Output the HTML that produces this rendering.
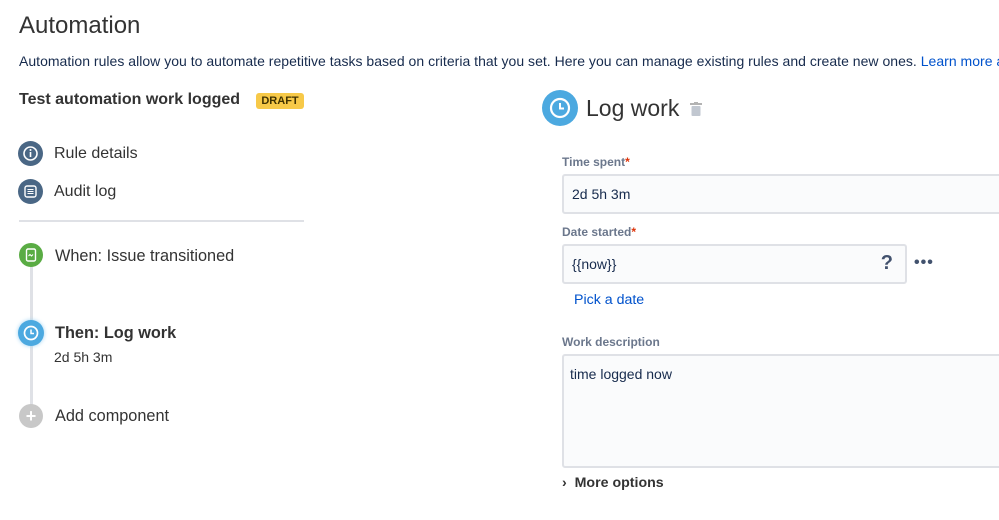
<!DOCTYPE html>
<html><head><meta charset="utf-8"><style>
*{margin:0;padding:0;box-sizing:border-box}
body{width:999px;height:520px;overflow:hidden;background:#fff;font-family:"Liberation Sans",Arial,sans-serif;color:#333;position:relative}
.a{position:absolute;white-space:nowrap}
.ic{position:absolute;border-radius:50%}
.lbl{font-size:12px;font-weight:bold;color:#6b778c}
.lbl b{color:#de350b}
.inp{position:absolute;background:#fafbfc;border:2px solid #dfe1e6;border-radius:3px;font-size:14px;color:#172b4d}
</style></head><body>
<div class="a" style="left:19px;top:12px;font-size:24px;color:#333">Automation</div>
<div class="a" style="left:19px;top:53px;font-size:14px;letter-spacing:0.02px;color:#172b4d">Automation rules allow you to automate repetitive tasks based on criteria that you set. Here you can manage existing rules and create new ones. <span style="color:#0052cc">Learn more about</span></div>
<div class="a" style="left:19px;top:91px;font-size:16px;font-weight:bold;color:#333">Test automation work logged</div>
<div class="a" style="left:256px;top:93px;width:48px;height:16px;background:#f7c948;border-radius:3px;font-size:11px;font-weight:bold;color:#403200;text-align:center;line-height:16px">DRAFT</div>

<div class="ic" style="left:18px;top:141px;width:25px;height:25px;background:#4a6785"><svg width="25" height="25"><circle cx="12.5" cy="12.5" r="6.5" fill="none" stroke="#fff" stroke-width="1.6"/><rect x="11.7" y="11" width="1.6" height="5" fill="#fff"/><circle cx="12.5" cy="9" r="1" fill="#fff"/></svg></div>
<div class="a" style="left:54px;top:145px;font-size:16px">Rule details</div>
<div class="ic" style="left:18px;top:179px;width:25px;height:25px;background:#4a6785"><svg width="25" height="25"><rect x="7" y="7" width="11" height="11" rx="2" fill="none" stroke="#fff" stroke-width="1.4"/><path d="M9.5 10.5h6M9.5 12.5h6M9.5 14.5h6" stroke="#fff" stroke-width="1"/></svg></div>
<div class="a" style="left:54px;top:183px;font-size:16px">Audit log</div>
<div class="a" style="left:19px;top:220px;width:285px;height:2px;background:#dfe1e6"></div>

<div class="a" style="left:30px;top:260px;width:3px;height:150px;background:#dfe1e6"></div>
<div class="ic" style="left:19px;top:243px;width:24px;height:24px;background:#5aac44"><svg width="24" height="24"><rect x="7.5" y="6" width="9" height="12" rx="1.5" fill="none" stroke="#fff" stroke-width="1.4"/><path d="M9.5 13l1.5-1.5 1.5 1.5 1.5-1.5" stroke="#fff" fill="none"/></svg></div>
<div class="a" style="left:55px;top:247px;font-size:16.3px">When: Issue transitioned</div>
<div class="ic" style="left:18px;top:320px;width:26px;height:26px;background:#4ca9e0;box-shadow:0 0 4px #9fd3f3"><svg width="26" height="26"><circle cx="13" cy="13" r="6.5" fill="none" stroke="#fff" stroke-width="1.7"/><path d="M13 9.5v4h3" stroke="#fff" stroke-width="1.5" fill="none"/></svg></div>
<div class="a" style="left:55px;top:324px;font-size:16.3px;font-weight:bold">Then: Log work</div>
<div class="a" style="left:54px;top:349px;font-size:14px">2d 5h 3m</div>
<div class="ic" style="left:19px;top:404px;width:24px;height:24px;background:#c8c8c8;color:#fff;font-size:18px;font-weight:bold;text-align:center;line-height:24px">+</div>
<div class="a" style="left:55px;top:407px;font-size:16.3px">Add component</div>

<div class="ic" style="left:542px;top:90px;width:36px;height:36px;background:#4ca9e0"><svg width="36" height="36"><circle cx="18" cy="18" r="9" fill="none" stroke="#fff" stroke-width="2.2"/><path d="M18 13v5.5h4" stroke="#fff" stroke-width="2" fill="none"/></svg></div>
<div class="a" style="left:586px;top:95px;font-size:23px;color:#333">Log work</div>
<svg class="a" style="left:690px;top:102px" width="12" height="14"><rect x="0" y="1" width="12" height="2" fill="#b3b3b3"/><rect x="4" y="0" width="4" height="2" fill="#b3b3b3"/><rect x="1.5" y="4" width="9" height="10" rx="1" fill="#c1c7d0"/></svg>

<div class="a lbl" style="left:562px;top:155px">Time spent<b>*</b></div>
<div class="inp" style="left:562px;top:174px;width:450px;height:40px;padding:10px 8px">2d 5h 3m</div>
<div class="a lbl" style="left:562px;top:225px">Date started<b>*</b></div>
<div class="inp" style="left:562px;top:244px;width:345px;height:40px;padding:10px 8px">{{now}}<span style="position:absolute;right:12px;top:6px;font-size:20px;font-weight:bold;color:#42526e">?</span></div>
<div class="a" style="left:914px;top:254px;font-size:16px;font-weight:bold;color:#42526e;letter-spacing:1px">•••</div>
<div class="a" style="left:574px;top:292px;font-size:14.2px;color:#0052cc">Pick a date</div>
<div class="a lbl" style="left:562px;top:335px">Work description</div>
<div class="inp" style="left:562px;top:354px;width:450px;height:114px;padding:10px 6px">time logged now</div>
<div class="a" style="left:562px;top:475px;font-size:14.2px;font-weight:bold;color:#333">›&nbsp; More options</div>
</body></html>
